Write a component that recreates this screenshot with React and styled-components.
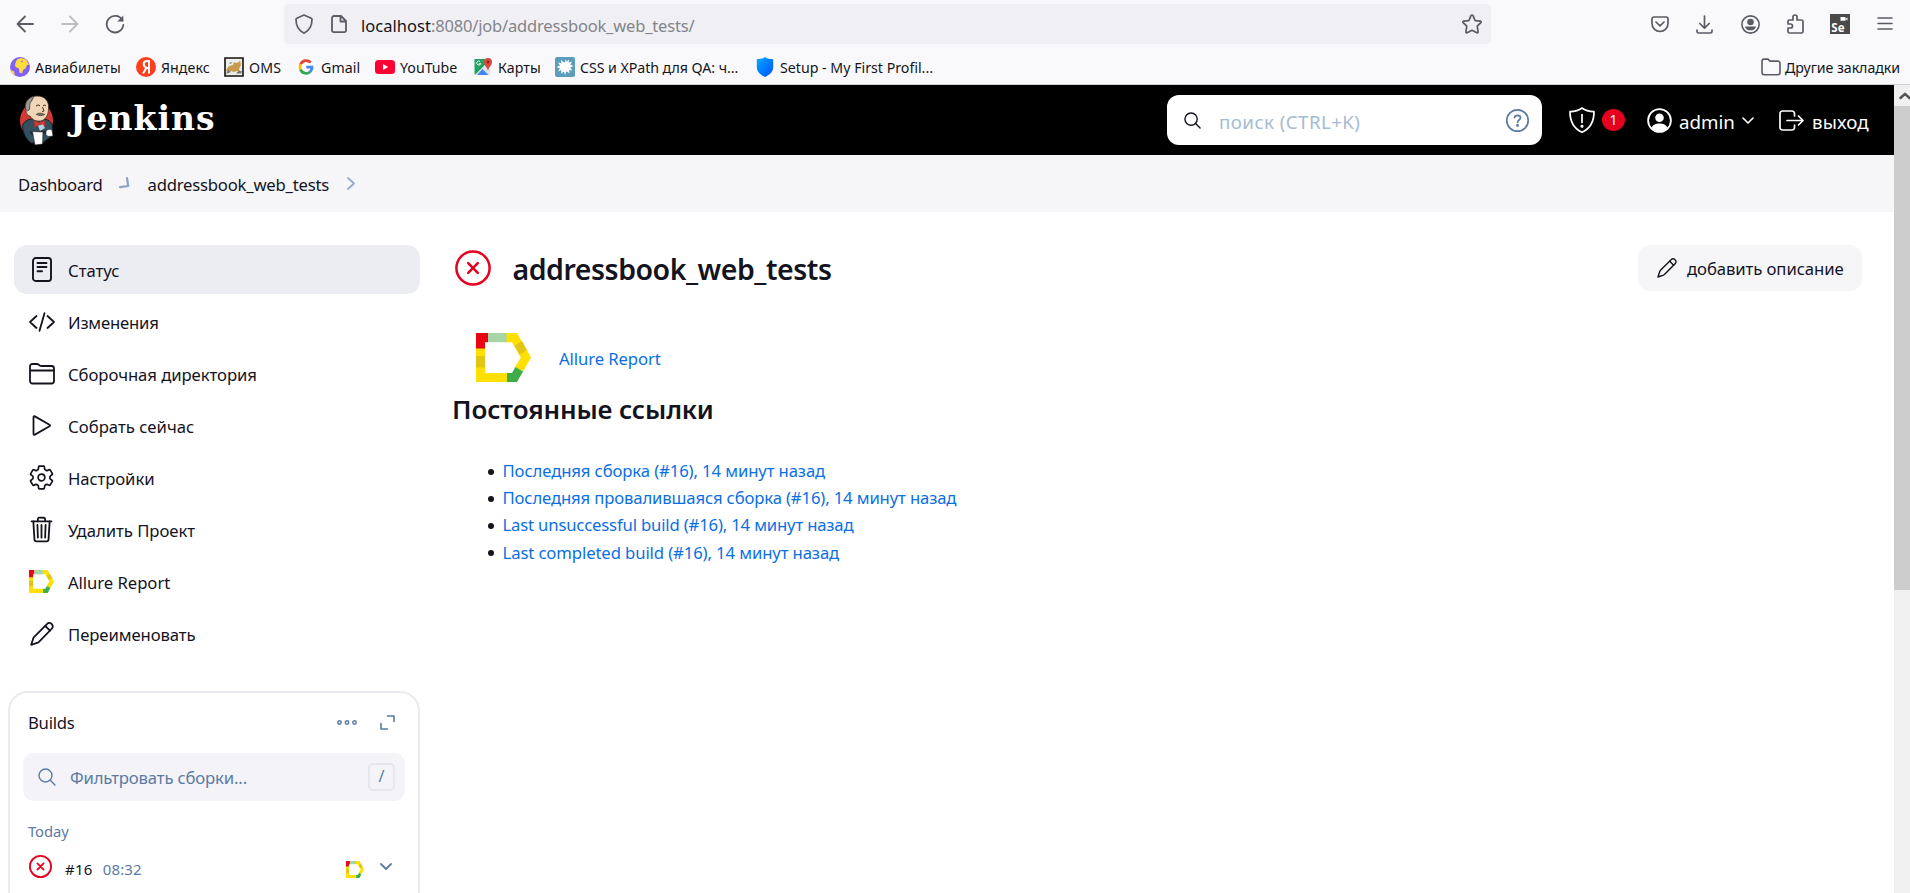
import React from "react";
import styled, { createGlobalStyle } from "styled-components";
import { IoSettingsOutline, IoTrashOutline } from "react-icons/io5";

const ink = "#14141f";
const slate = "#5b7ba4";
const red = "#e6001f";
const chrome = "#5b5b66";
const link = "#0b6fe4";

const Global = createGlobalStyle`
  * { box-sizing: border-box; }
  html, body { margin: 0; padding: 0; height: 100%; overflow: hidden; background: #fff; }
  body { font-family: "Noto Sans", "Open Sans", sans-serif; color: ${ink}; }
  svg { display: block; flex: none; overflow: visible; }
`;

/* ---------- primitives ---------- */

const Label = styled.span`
  white-space: pre;
  flex: none;
  font-size: ${(p) => p.$size || 16.7}px;
  letter-spacing: ${(p) => p.$ls || 0}px;
  color: ${(p) => p.$color || "inherit"};
  margin-left: ${(p) => p.$ml || 0}px;
  padding-top: ${(p) => p.$drop || 0}px;
`;

const Slot = styled.span`
  display: flex;
  flex: none;
  align-items: center;
  justify-content: center;
  width: ${(p) => p.$w}px;
  margin-left: ${(p) => p.$ml || 0}px;
  padding-top: ${(p) => p.$drop || 0}px;
  padding-bottom: ${(p) => p.$lift || 0}px;
`;

const Svg = ({ w = 24, h = w, vb = `0 0 ${w} ${h}`, color = ink, sw = 1.6, children }) => (
  <svg width={w} height={h} viewBox={vb} fill="none" stroke={color} strokeWidth={sw} strokeLinecap="round" strokeLinejoin="round">
    {children}
  </svg>
);

/* ---------- layout ---------- */

const Screen = styled.div`
  display: flex;
  flex-direction: column;
  width: 1910px;
  height: 893px;
  overflow: hidden;
`;

const Browser = styled.div`
  flex: none;
  height: 85px;
  background: #f9f9fb;
  border-bottom: 1px solid #cfcfcf;
`;

const NavBar = styled.div`
  display: flex;
  align-items: center;
  height: 48px;
`;

const UrlBar = styled.div`
  display: flex;
  align-items: center;
  width: 1207px;
  height: 40px;
  margin-left: 159px;
  border-radius: 4px;
  background: #f0f0f4;
`;

const UrlText = styled.div`
  display: flex;
  flex: 1;
  margin-left: 13px;
  padding-top: 2px;
`;

const Bookmarks = styled.div`
  display: flex;
  align-items: center;
  height: 38px;
  color: #15141a;
`;

const BookmarkItem = styled.div`
  display: flex;
  align-items: center;
  flex: none;
  width: ${(p) => p.$w}px;
  gap: 5px;
`;

const OtherBookmarks = styled.div`
  display: flex;
  align-items: center;
  gap: 4px;
  margin-left: auto;
  padding-right: 10px;
`;

const Viewport = styled.div`
  display: flex;
  flex: 1;
  min-height: 0;
`;

const Page = styled.div`
  display: flex;
  flex-direction: column;
  width: 1894px;
  overflow: hidden;
`;

const Header = styled.header`
  display: flex;
  align-items: center;
  flex: none;
  height: 70px;
  background: #000;
  color: #fff;
`;

const Brand = styled.span`
  width: 1097px;
  margin-left: 15px;
  padding-bottom: 2px;
  font: bold 33px/38px "DejaVu Serif", serif;
  letter-spacing: 1px;
`;

const Search = styled.div`
  display: flex;
  align-items: center;
  width: 375px;
  height: 50px;
  border-radius: 12px;
  background: #fff;
`;

const Badge = styled.span`
  width: 23px;
  height: 22px;
  margin-left: 6px;
  border-radius: 50%;
  background: ${red};
  font-size: 14px;
  line-height: 22px;
  text-align: center;
`;

const HeaderText = styled.span`
  width: ${(p) => p.$w}px;
  padding-top: 3px;
  margin-left: ${(p) => p.$ml}px;
  font-size: 18.7px;
  letter-spacing: ${(p) => p.$ls}px;
`;

const Crumbs = styled.nav`
  display: flex;
  align-items: center;
  flex: none;
  height: 57px;
  padding: 1px 0 0 18px;
  background: #f6f6f9;
`;

const Body = styled.div`
  display: flex;
  flex: 1;
  min-height: 0;
`;

const Side = styled.aside`
  display: flex;
  flex-direction: column;
  flex: none;
  width: 420px;
  padding-top: 33px;
`;

const Tasks = styled.div`
  display: flex;
  flex-direction: column;
  gap: 3px;
  padding-left: 14px;
`;

const Task = styled.div`
  display: flex;
  align-items: center;
  flex: none;
  height: 49px;
  padding-left: 11px;
  border-radius: 13px;
  background: ${(p) => (p.$active ? "#ecedf3" : "transparent")};
`;

const TaskIcon = styled.span`
  display: flex;
  align-items: center;
  justify-content: center;
  width: 33px;
  margin-right: 10px;
`;

const BuildsCard = styled.section`
  display: flex;
  flex-direction: column;
  flex: none;
  height: 260px;
  margin: 33px 0 0 8px;
  border: 2px solid #eaeaf1;
  border-radius: 20px;
`;

const BuildsHead = styled.div`
  display: flex;
  align-items: center;
  height: 60px;
  padding: 0 23px 2px 18px;
`;

const Filter = styled.div`
  display: flex;
  align-items: center;
  height: 48px;
  margin: 0 13px;
  padding: 0 10px 0 15px;
  border-radius: 11px;
  background: #f3f3f8;
  color: ${slate};
`;

const Key = styled.kbd`
  width: 27px;
  height: 28px;
  margin-left: auto;
  border: 2px solid #e6e6ef;
  border-radius: 5px;
  font: 16px/23px "Noto Sans", sans-serif;
  text-align: center;
`;

const Day = styled.div`
  display: flex;
  align-items: center;
  height: 22px;
  margin-top: 19px;
  padding-left: 18px;
`;

const Build = styled.div`
  display: flex;
  align-items: center;
  height: 30px;
  margin-top: 9px;
  padding-left: 19px;
`;

const Main = styled.main`
  display: flex;
  flex-direction: column;
  flex: 1;
  padding: 33px 32px 0 33px;
`;

const TitleRow = styled.div`
  display: flex;
  align-items: center;
  height: 46px;
`;

const Title = styled.h1`
  flex: 1;
  margin: 0 0 0 21px;
  padding-top: 1px;
  font-size: 28.5px;
  line-height: 38px;
  font-weight: 600;
  letter-spacing: -0.47px;
`;

const Button = styled.button`
  display: flex;
  align-items: center;
  width: 224px;
  height: 46px;
  padding: 0 0 0 19px;
  border: 0;
  border-radius: 12px;
  background: #f6f6f9;
  color: ${ink};
  font-family: inherit;
`;

const Report = styled.div`
  display: flex;
  align-items: center;
  height: 50px;
  margin: 41px 0 0 23px;
  gap: 28px;
  color: ${link};
`;

const SubTitle = styled.h2`
  margin: 10px 0 0 -1px;
  font-size: 26px;
  line-height: 34px;
  font-weight: 600;
  letter-spacing: -0.14px;
`;

const Links = styled.ul`
  margin: 31px 0 0;
  padding: 0 0 0 34px;
  list-style: none;
`;

const LinkItem = styled.li`
  display: flex;
  align-items: center;
  height: 27.2px;
  color: ${link};

  &::before {
    content: "";
    width: 6px;
    height: 6px;
    margin: 2px 9px 0 0.5px;
    border-radius: 50%;
    background: ${ink};
  }
`;

const ScrollTrack = styled.div`
  width: 16px;
  background: #f0f0f0;
`;

const ScrollArrow = styled.div`
  display: flex;
  justify-content: flex-end;
  align-items: center;
  height: 21px;
`;

const ScrollThumb = styled.div`
  height: 484px;
  background: #cdcdcd;
`;

/* ---------- drawings ---------- */

const Allure = ({ w, h }) => (
  <svg width={w} height={h} viewBox="0 0 55 49" preserveAspectRatio="none">
    <path d="M30 0h11l14 24.500-8 14-8-4.500 5.800-9.500L36 9.200h-6z" fill="#ffe000" />
    <path d="M0 15h9v25h22v9H0z" fill="#ffe000" />
    <path d="M0 0h12v9.200H9V15.500H0z" fill="#e90613" />
    <path d="M12 0h18.500v9.200H12z" fill="#a8d5a5" />
    <path d="M0 23h9v11.500H0z" fill="#e3c513" />
    <path d="M38.500 12.500l7.500-4.500 5 9-7.500 4.500z" fill="#e3c513" />
    <path d="M31 49V40h5l3.500-6 7.500 4.500L41 49z" fill="#3dac49" />
  </svg>
);

const Failed = ({ size, sw }) => (
  <Svg w={size} vb="0 0 36 36" color={red} sw={sw}>
    <circle cx="18" cy="18" r="16.600" />
    <path d="M13.200 13.200l9.600 9.600M22.800 13.200l-9.600 9.600" />
  </Svg>
);

const Magnifier = ({ size, color, sw }) => (
  <Svg w={size} vb="0 0 18 18" color={color} sw={sw}>
    <circle cx="7.500" cy="7.500" r="6.500" />
    <path d="M12.300 12.300L17 17" />
  </Svg>
);

const Pencil = ({ size, sw = 1.7 }) => (
  <Svg w={size} vb="0 0 24 24" sw={sw}>
    <path d="M1.200 22.800L3.300 16.200Q3.600 15.400 4.200 14.800L17.200 1.900a2.900 2.900 0 0 1 4.600 .4a2.900 2.900 0 0 1 .2 4.200L9.200 19.600Q8.500 20.300 7.700 20.600z" />
    <path d="M15.300 4l4.700 4.700" />
  </Svg>
);

const Chevron = ({ w, h, color, sw = 1.8 }) => (
  <Svg w={w} h={h} vb="0 0 12 7" color={color} sw={sw}>
    <path d="M1 1l5 5 5-5" />
  </Svg>
);

const Butler = () => (
  <svg width="36" height="50" viewBox="0 0 36 50">
    <ellipse cx="17.500" cy="25.500" rx="16.500" ry="18.500" fill="#d33833" />
    <path d="M3.500 31c1-4 4-6 8-7l5-1 9 1c5 1 8 4 8 9l-1 8-9 7H12C7 44 4 38 3.500 31z" fill="#335061" stroke="#14202a" strokeWidth="1" />
    <path d="M7 13C7 5 12 1 18 1c8 0 12 5 11.500 12 .3 7-3 12-8 13-5 .5-8-1-10.500-5-3 0-4.500-4-4-8z" fill="#f0d6b7" stroke="#49301f" strokeWidth=".8" />
    <path d="M6.500 14C5.500 7 9 3 15 1.300L12.500 6c-2.500 2-1.500 5-2 8.500l-2 1.500z" fill="#9a9694" stroke="#3c3a39" strokeWidth=".8" />
    <path d="M17 11q2-2 4-.3M24 10.500q2-1 3 .5M23.500 12l1.500 4-2 .8" fill="none" stroke="#49301f" strokeWidth="1" />
    <path d="M17 19.500q3-3 9 0-4 2.500-9 0z" fill="#6d6b6d" stroke="#49301f" strokeWidth=".5" />
    <path d="M15 25.500l5 2 6-2v6l-5.500-2-5 3z" fill="#d33833" stroke="#81322f" strokeWidth=".6" />
    <path d="M19 30.500l5-1 2 3.500-5 3z" fill="#b8d0df" />
    <path d="M10 36.500l18-1-3 4-12 1z" fill="#1d2f3b" />
    <path d="M13.500 36.500l10.500.5-.5 12L16 50z" fill="#fff" stroke="#222" strokeWidth=".6" />
    <path d="M27 36c2-2 4-2 6-1l1 6-5 .5-2-2z" fill="#fff" stroke="#222" strokeWidth=".6" />
  </svg>
);

const bookmarkIcons = {
  globe: (
    <svg width="20" height="20" viewBox="0 0 20 20">
      <circle cx="10" cy="10" r="10" fill="#7f62f5" />
      <path d="M7 2.500L11 1l5 1.500 3 5-2 .5-1.500 3.500-2.500 1.500-1 3.500-2.500-1L9 11.500 5.500 10 5 7z" fill="#ffdc3c" />
      <path d="M10.500 3.500l2.500.5-1 1.500z" fill="#7f62f5" />
      <path d="M.6 12.500l3.400 2 .8 4A10 10 0 0 1 .6 12.500z" fill="#ffdc3c" />
    </svg>
  ),
  yandex: (
    <svg width="20" height="20" viewBox="0 0 20 20">
      <circle cx="10" cy="10" r="10" fill="#fc3f1d" />
      <path d="M13 16.500V4h-1.800C8.900 4 7.700 5.300 7.700 7c0 2 1 3.200 3 4H13M10.400 11L7 16.500" stroke="#fff" strokeWidth="2" fill="none" />
    </svg>
  ),
  cat: (
    <svg width="20" height="20" viewBox="0 0 20 20">
      <path d="M1 1h18v18H1z" fill="#eceee8" stroke="#111" strokeWidth="1.600" />
      <path d="M2 13l3-4 4-1 1-3 2 1 3-1 1-2 1 5-2 4 1 3-3-1-3 1-3-1-3 2z" fill="#c99a4c" />
      <path d="M2 17l2-4 3 2zM12 16.500l3-3 3 1-1 2zM5 6l3-1-1 2z" fill="#77796f" />
    </svg>
  ),
  google: (
    <svg width="20" height="20" viewBox="0 0 20 20">
      <circle cx="10" cy="10" r="10" fill="#fff" />
      <g fill="none" strokeWidth="2.800">
        <path d="M14.700 5.600A6.100 6.100 0 0 0 4.600 7.300" stroke="#ea4335" />
        <path d="M4.600 7.200a6.100 6.100 0 0 0 0 5.600" stroke="#fbbc04" />
        <path d="M4.500 12.600a6.100 6.100 0 0 0 9.700 2.200" stroke="#34a853" />
        <path d="M14 15a6.100 6.100 0 0 0 2-4.800H10.300" stroke="#4285f4" />
      </g>
    </svg>
  ),
  youtube: (
    <svg width="20" height="20" viewBox="0 0 20 20">
      <rect y="3" width="20" height="14" rx="3.500" fill="#ff0033" />
      <path d="M8 7l5.200 3L8 13z" fill="#fff" />
    </svg>
  ),
  maps: (
    <svg width="20" height="20" viewBox="0 0 20 20">
      <path d="M1.500 2h11.500v5L3 17.500H1.500z" fill="#1fa463" />
      <path d="M2 18L12 8l5 4v6z" fill="#dfe3e8" />
      <path d="M4 18l5.500-6 6 6z" fill="#4285f4" />
      <path d="M15 14c-.5-4-4-5-4-9a4 4 0 0 1 8 0c0 4-3.500 5-4 9z" fill="#dd4b3e" />
      <circle cx="15" cy="5" r="1.500" fill="#8c231b" />
      <path d="M7 4.500a2 2 0 1 0 .7 2H6.300" stroke="#fff" strokeWidth="1" fill="none" />
    </svg>
  ),
  splash: (
    <svg width="20" height="20" viewBox="0 0 20 20">
      <rect width="20" height="20" rx="2" fill="#5d9dbc" />
      <path d="M10 5l1-3 .7 3L14 2.500l-.3 3.300L17 4.500l-1.600 3.300L18.500 9l-3.100 1.300L17 13.500l-3-.6.6 3.600-3-2.300L10 18l-1-3.600-3 2.300.5-3.600L3 14.500l2-3L1.500 10l3.500-1.500L3 5.500l3.500.7L6 2.700l3 2.800z" fill="#fff" />
    </svg>
  ),
  shield: (
    <svg width="20" height="20" viewBox="0 0 20 20">
      <defs>
        <linearGradient id="shieldFill" x1="0" y1="0" x2="1" y2="1">
          <stop offset="0" stopColor="#00aaff" />
          <stop offset="1" stopColor="#0050ff" />
        </linearGradient>
      </defs>
      <path d="M10 0c2 2 5 2 8.200 2.300V10c0 5-4 8-8.200 10C5.800 18 1.800 15 1.800 10V2.300C5 2 8 2 10 0z" fill="url(#shieldFill)" />
    </svg>
  ),
};

const bookmarks = [
  { icon: "globe", text: "Авиабилеты", w: 126, ls: 0.15 },
  { icon: "yandex", text: "Яндекс", w: 88, ls: 0.05 },
  { icon: "cat", text: "OMS", w: 72, ls: 0.2 },
  { icon: "google", text: "Gmail", w: 79, ls: 0.1 },
  { icon: "youtube", text: "YouTube", w: 98, ls: 0 },
  { icon: "maps", text: "Карты", w: 82, ls: 0.05 },
  { icon: "splash", text: "CSS и XPath для QA: ч...", w: 200, ls: -0.05 },
  { icon: "shield", text: "Setup - My First Profil...", w: 170, ls: 0 },
];

const tasks = [
  {
    text: "Статус", ls: 0,
    active: true,
    icon: (
      <Svg w={20} h={25} sw={1.9}>
        <rect x="1" y="1" width="18" height="23" rx="2.800" />
        <path d="M5.500 6h9M5.500 10h9M5.500 14.200h4.500" />
      </Svg>
    ),
  },
  {
    text: "Изменения", ls: -0.2,
    icon: (
      <Svg w={26} h={20} sw={1.8}>
        <path d="M7.500 4L1 10l6.500 6M18.500 4L25 10l-6.500 6M15.500 1.200l-5 17.600" />
      </Svg>
    ),
  },
  {
    text: "Сборочная директория", ls: -0.06,
    icon: (
      <Svg w={26} h={22} sw={1.8}>
        <path d="M1 18V3.500A2.500 2.500 0 0 1 3.500 1H8q1 0 1.800.7l1 .8q.7.500 1.700.5H22.500A2.500 2.500 0 0 1 25 5.500V18a2.500 2.500 0 0 1-2.500 2.500h-19A2.500 2.500 0 0 1 1 18zM1 7.500h24" />
      </Svg>
    ),
  },
  {
    text: "Собрать сейчас", ls: 0.03,
    icon: (
      <Svg w={19} h={21} sw={1.8}>
        <path d="M1.500 2.300v16.400q0 1.600 1.400.9l14.600-8.300q1.200-.8 0-1.600L2.900 1.400q-1.400-.7-1.400.9z" />
      </Svg>
    ),
  },
  { text: "Настройки", ls: -0.1, icon: <IoSettingsOutline size={27} color={ink} /> },
  { text: "Удалить Проект", ls: -0.03, icon: <IoTrashOutline size={29} color={ink} /> },
  { text: "Allure Report", ls: -0.06, icon: <Allure w={25} h={23} /> },
  { text: "Переименовать", ls: -0.09, icon: <Pencil size={24} sw={1.800} /> },
];

const permalinks = [
  { text: "Последняя сборка (#16), 14 минут назад", ls: -0.11 },
  { text: "Последняя провалившаяся сборка (#16), 14 минут назад", ls: -0.14 },
  { text: "Last unsuccessful build (#16), 14 минут назад", ls: -0.17 },
  { text: "Last completed build (#16), 14 минут назад", ls: -0.11 },
];

/* ---------- sections ---------- */

const BrowserChrome = () => (
  <Browser>
    <NavBar>
      <Slot $w={20} $ml={15}>
        <Svg w={18} h={18} color={chrome} sw={1.8}><path d="M17 9H1.500M9 1.500L1.500 9 9 16.500" /></Svg>
      </Slot>
      <Slot $w={20} $ml={25}>
        <Svg w={18} h={18} color="#bcbcc2" sw={1.8}><path d="M1 9h15.500M9 1.500L16.500 9 9 16.500" /></Svg>
      </Slot>
      <Slot $w={20} $ml={25}>
        <Svg w={20} h={20} color={chrome} sw={1.8}>
          <path d="M17.500 6.500A8.300 8.300 0 1 0 18.300 11" />
          <path d="M18.300 1.500v6h-6z" fill={chrome} stroke="none" />
        </Svg>
      </Slot>
      <UrlBar>
        <Slot $w={20} $ml={10}>
          <Svg w={18} h={20} color={chrome} sw={1.700}>
            <path d="M9 1l7.200 3.300q.8.400.8 1.200c0 6-2.500 11-8 13.700C3.500 16.500 1 11.500 1 5.500q0-.8.8-1.200z" />
          </Svg>
        </Slot>
        <Slot $w={18} $ml={16}>
          <Svg w={16} h={18} color={chrome} sw={1.8}>
            <path d="M3 1h7l5 5v9.500a1.700 1.700 0 0 1-1.700 1.700H2.700A1.700 1.700 0 0 1 1 15.500V3a2 2 0 0 1 2-2zM9.500 1.500V6.500H14.500" />
          </Svg>
        </Slot>
        <UrlText>
          <Label $size={16.5} $ls={0.03} $color="#15141a">localhost</Label>
          <Label $size={16.5} $ls={-0.18} $color="#84848b">:8080/job/addressbook_web_tests/</Label>
        </UrlText>
        <Slot $w={20}>
          <Svg w={20} h={20} color={chrome} sw={1.700}>
            <path d="M10 1q.7 0 1 .7l2.200 4.900 5.200.6q1.300.3.500 1.400L15.200 12.200l.9 5.500q.1 1.500-1.200 1L10 16.200l-4.900 2.500q-1.300.5-1.200-1l.9-5.500L1.100 8.600q-.8-1.100.5-1.400l5.200-.6L9 1.700Q9.300 1 10 1z" />
          </Svg>
        </Slot>
        <Slot $w={9} />
      </UrlBar>
      <Slot $w={20} $ml={159}>
        <Svg w={18} h={17} color={chrome} sw={1.700}>
          <path d="M3 1h12a2 2 0 0 1 2 2v4.500a8 8 0 0 1-16 0V3a2 2 0 0 1 2-2zM5 6l4 3.800L13 6" />
        </Svg>
      </Slot>
      <Slot $w={20} $ml={24}>
        <Svg w={17} h={19} color={chrome} sw={1.700}>
          <path d="M8.500 1v12M3.800 8.500l4.700 4.700 4.700-4.700M1 15v1.500A1.500 1.500 0 0 0 2.500 18h12a1.500 1.500 0 0 0 1.500-1.500V15" />
        </Svg>
      </Slot>
      <Slot $w={20} $ml={26}>
        <Svg w={19} h={19} color={chrome} sw={1.600}>
          <circle cx="9.500" cy="9.500" r="8.600" />
          <circle cx="9.500" cy="7" r="3.300" fill={chrome} stroke="none" />
          <path d="M4 11.500h11c-.5 3-3 3.800-5.500 3.800S4.500 14.500 4 11.500z" fill={chrome} stroke="none" />
        </Svg>
      </Slot>
      <Slot $w={20} $ml={25}>
        <Svg w={18} h={20} color={chrome} sw={1.700}>
          <path d="M2 10V7.500A1.500 1.500 0 0 1 3.500 6H7V3a2 2 0 0 1 4 0v3h4.500A1.500 1.500 0 0 1 17 7.500V17.500A1.500 1.500 0 0 1 15.500 19h-12A1.500 1.500 0 0 1 2 17.500V14h2.500a2 2 0 0 0 0-4z" />
        </Svg>
      </Slot>
      <Slot $w={20} $ml={25}>
        <svg width="20" height="20" viewBox="0 0 20 20">
          <path d="M0 0h20v20H0z" fill="#4a4a4a" />
          <path d="M10.500 3h5v3.800h-5zM15.500 4.900l2-1.500v3z" fill="#fff" />
          <text x="1.300" y="17.500" fill="#fff" fontFamily="Noto Sans, sans-serif" fontWeight="700" fontSize="11.500">Se</text>
        </svg>
      </Slot>
      <Slot $w={20} $ml={25}>
        <Svg w={16} h={14} color={chrome} sw={1.600}><path d="M1 1h14M1 6.500h14M1 12h14" /></Svg>
      </Slot>
    </NavBar>
    <Bookmarks>
      <Slot $w={10} />
      {bookmarks.map((b) => (
        <BookmarkItem key={b.text} $w={b.w}>
          {bookmarkIcons[b.icon]}
          <Label $size={14.2} $ls={b.ls}>{b.text}</Label>
        </BookmarkItem>
      ))}
      <OtherBookmarks>
        <Svg w={20} h={18} color={chrome} sw={1.600}>
          <path d="M1 14.500V3.300A2.200 2.200 0 0 1 3.200 1.100H7l2 2h7.800A2.200 2.200 0 0 1 19 5.300v9.200a2.200 2.200 0 0 1-2.200 2.200H3.200A2.200 2.200 0 0 1 1 14.500z" />
        </Svg>
        <Label $size={14.2} $ls={-0.06}>Другие закладки</Label>
      </OtherBookmarks>
    </Bookmarks>
  </Browser>
);

const TopHeader = () => (
  <Header>
    <Slot $w={36} $ml={19}><Butler /></Slot>
    <Brand>Jenkins</Brand>
    <Search>
      <Slot $w={18} $ml={16}><Magnifier size={17} color={ink} sw={1.5} /></Slot>
      <HeaderText $w={287} $ml={18} $ls={0.45}>
        <Label $size={18.7} $ls={0.45} $color="#a6bbd3">поиск (CTRL+K)</Label>
      </HeaderText>
      <Svg w={23} h={23} color={slate} sw={1.700}>
        <circle cx="11.500" cy="11.500" r="10.700" />
        <path d="M8.500 8.700c.2-1.700 1.500-2.400 3-2.400s3 .9 3 2.500c0 2.200-2.900 2.200-2.900 4.500" />
        <circle cx="11.500" cy="16.500" r=".6" fill={slate} />
      </Svg>
    </Search>
    <Slot $w={28} $ml={26}>
      <Svg w={26} h={26} color="#fff" sw={1.700}>
        <path d="M13 1c3.500 2.600 8 3.500 12 3.700C25 14 22.500 21 13 25.200 3.500 21 1 14 1 4.700 5 4.500 9.500 3.600 13 1zM13 7.500v8" />
        <circle cx="13" cy="19.300" r=".7" fill="#fff" />
      </Svg>
    </Slot>
    <Badge>1</Badge>
    <Slot $w={25} $ml={22}>
      <Svg w={25} h={25} color="#fff" sw={1.800}>
        <circle cx="12.500" cy="12.500" r="11.400" />
        <circle cx="12.500" cy="9.800" r="4.300" fill="#fff" stroke="none" />
        <path d="M4.500 20c1.500-3.500 4.500-4.500 8-4.500s6.500 1 8 4.500a11 11 0 0 1-16 0z" fill="#fff" stroke="none" />
      </Svg>
    </Slot>
    <HeaderText $w={63} $ml={7} $ls={0}>admin</HeaderText>
    <Chevron w={12} h={7} color="#fff" sw={1.600} />
    <Slot $w={25} $ml={25}>
      <Svg w={25} h={21} color="#fff" sw={1.700}>
        <path d="M15.500 6V3.500A2.500 2.500 0 0 0 13 1H3.500A2.500 2.500 0 0 0 1 3.500v14A2.500 2.500 0 0 0 3.500 20H13a2.500 2.500 0 0 0 2.500-2.500V15M8 10.500h16M19.500 6l4.500 4.500-4.500 4.500" />
      </Svg>
    </Slot>
    <HeaderText $w={60} $ml={8} $ls={0.1}>выход</HeaderText>
  </Header>
);

const BuildHistory = () => (
  <BuildsCard>
    <BuildsHead>
      <Label $ls={-0.25}>Builds</Label>
      <Slot $w={20} $ml={262}>
        <Svg w={20} h={5} color={slate} sw={1.500}>
          <circle cx="2.500" cy="2.500" r="1.700" /><circle cx="10" cy="2.500" r="1.700" /><circle cx="17.500" cy="2.500" r="1.700" />
        </Svg>
      </Slot>
      <Slot $w={16} $ml={23}>
        <Svg w={15} h={15} color={slate} sw={1.600}><path d="M7.500 1H14V6.500M1 8.500V14H7.500" /></Svg>
      </Slot>
    </BuildsHead>
    <Filter>
      <Magnifier size={18} color={slate} sw={1.400} />
      <Label $ml={14} $ls={-0.16}>Фильтровать сборки...</Label>
      <Key>/</Key>
    </Filter>
    <Day><Label $size={14.8} $ls={-0.1} $color={slate}>Today</Label></Day>
    <Build>
      <Failed size={23} sw={2.800} />
      <Label $size={15} $ls={0.3} $ml={13} $drop={5}>#16</Label>
      <Label $size={15} $ls={0.12} $ml={10} $drop={5} $color={slate}>08:32</Label>
      <Slot $w={20} $ml={203} $drop={7}><Allure w={18} h={17} /></Slot>
      <Slot $w={14} $ml={14}><Chevron w={12} h={7} color={slate} /></Slot>
    </Build>
  </BuildsCard>
);

export default function App() {
  return (
    <Screen>
      <Global />
      <BrowserChrome />
      <Viewport>
        <Page>
          <TopHeader />
          <Crumbs>
            <Label $ls={-0.2}>Dashboard</Label>
            <Slot $w={11} $ml={16} $lift={4}>
              <Svg w={10} h={11} color="#8fa3bd" sw={2.200}><path d="M8 1l1.200 8L1 10.200" /></Svg>
            </Slot>
            <Label $ls={-0.23} $ml={18}>addressbook_web_tests</Label>
            <Slot $w={9} $ml={17} $lift={1}>
              <Svg w={8} h={13} color="#9aaac2" sw={1.800}><path d="M1 1l6 5.500L1 12" /></Svg>
            </Slot>
          </Crumbs>
          <Body>
            <Side>
              <Tasks>
                {tasks.map((t) => (
                  <Task key={t.text} $active={t.active}>
                    <TaskIcon>{t.icon}</TaskIcon>
                    <Label $ls={t.ls} $drop={2}>{t.text}</Label>
                  </Task>
                ))}
              </Tasks>
              <BuildHistory />
            </Side>
            <Main>
              <TitleRow>
                <Slot $w={37} $ml={1.5} $lift={1}><Failed size={36} sw={2.500} /></Slot>
                <Title>addressbook_web_tests</Title>
                <Button>
                  <Pencil size={20} />
                  <Label $ml={10} $ls={-0.08}>добавить описание</Label>
                </Button>
              </TitleRow>
              <Report>
                <Allure w={55} h={49} />
                <Label $ls={-0.1} $drop={2}>Allure Report</Label>
              </Report>
              <SubTitle>Постоянные ссылки</SubTitle>
              <Links>
                {permalinks.map((l) => (
                  <LinkItem key={l.text}><Label $ls={l.ls}>{l.text}</Label></LinkItem>
                ))}
              </Links>
            </Main>
          </Body>
        </Page>
        <ScrollTrack>
          <ScrollArrow><Svg w={11} h={7} color="#555" sw={2.500}><path d="M1.500 6L6 1.800 10.500 6" /></Svg></ScrollArrow>
          <ScrollThumb />
        </ScrollTrack>
      </Viewport>
    </Screen>
  );
}
